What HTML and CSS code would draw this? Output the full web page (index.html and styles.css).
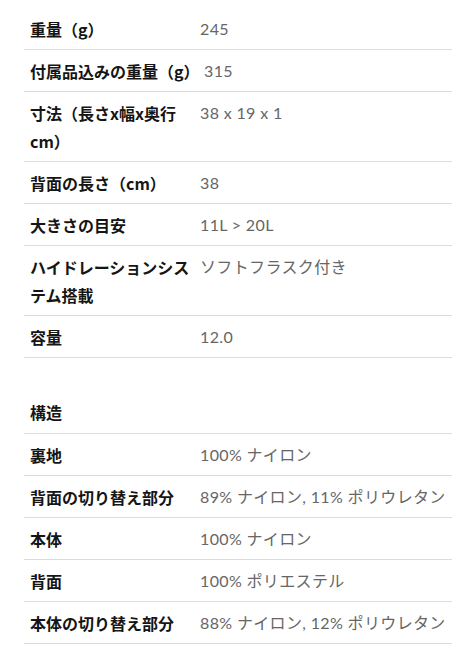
FILE: index.html
```html
<!DOCTYPE html>
<html lang="ja">
<head>
<meta charset="utf-8">
<title>Specs</title>
<link rel="stylesheet" href="styles.css">
</head>
<body>
<div class="specs">
  <div class="spec-group">
    <div class="row"><div class="label">重量（g）</div><div class="value">245</div></div>
    <div class="row row--wide"><div class="label">付属品込みの重量（g）</div><div class="value">315</div></div>
    <div class="row"><div class="label">寸法（長さx幅x奥行cm）</div><div class="value">38 x 19 x 1</div></div>
    <div class="row"><div class="label">背面の長さ（cm）</div><div class="value">38</div></div>
    <div class="row"><div class="label">大きさの目安</div><div class="value">11L &gt; 20L</div></div>
    <div class="row"><div class="label">ハイドレーションシステム搭載</div><div class="value">ソフトフラスク付き</div></div>
    <div class="row"><div class="label">容量</div><div class="value">12.0</div></div>
  </div>
  <div class="spec-group spec-group--section">
    <div class="row row--head"><div class="label">構造</div></div>
    <div class="row"><div class="label">裏地</div><div class="value">100% ナイロン</div></div>
    <div class="row"><div class="label">背面の切り替え部分</div><div class="value">89% ナイロン, 11% ポリウレタン</div></div>
    <div class="row"><div class="label">本体</div><div class="value">100% ナイロン</div></div>
    <div class="row"><div class="label">背面</div><div class="value">100% ポリエステル</div></div>
    <div class="row"><div class="label">本体の切り替え部分</div><div class="value">88% ナイロン, 12% ポリウレタン</div></div>
  </div>
</div>
</body>
</html>
```
FILE: styles.css
```css
html, body {
  margin: 0;
  padding: 0;
  background: #fff;
}
body {
  font-family: Lato, "Noto Sans CJK JP", sans-serif;
  font-size: 16px;
  line-height: 28px;
}
.specs {
  padding: 8px 21px 0 24px;
}
.spec-group--section {
  margin-top: 34px;
}
.row {
  display: grid;
  grid-template-columns: 170px 1fr;
  padding: 7px 0 6px;
  border-bottom: 1px solid #dcdcdc;
}
.row--wide {
  grid-template-columns: 174px 1fr;
}
.row--head {
  padding: 6px 0 7px;
}
.label {
  padding-left: 6px;
  font-family: "Noto Sans CJK JP", sans-serif;
  font-weight: 700;
  color: #151515;
}
.value {
  padding-left: 6px;
  color: #666;
  font-weight: 400;
  letter-spacing: 0.35px;
}
```
